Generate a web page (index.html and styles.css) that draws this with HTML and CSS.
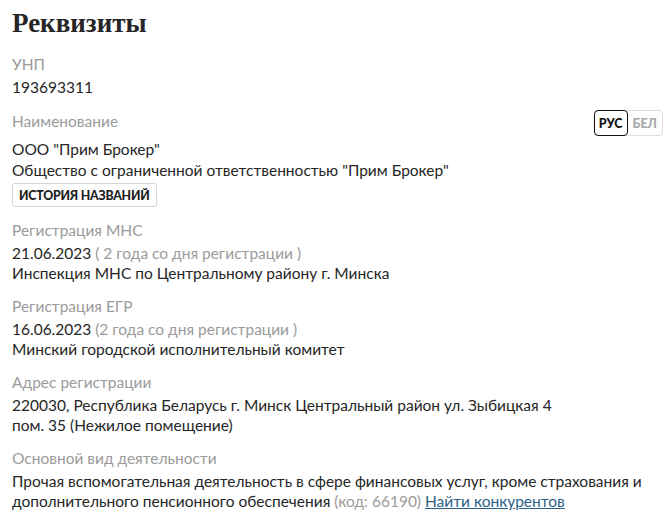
FILE: index.html
```html
<!DOCTYPE html>
<html lang="ru">
<head>
<meta charset="utf-8">
<link rel="stylesheet" href="styles.css">
</head>
<body>
<div class="page">
  <h1 class="title">Реквизиты</h1>

  <section class="field">
    <div class="label">УНП</div>
    <div class="value">193693311</div>
  </section>

  <section class="field">
    <div class="label-row">
      <div class="label">Наименование</div>
      <div class="lang">
        <span class="lang-btn active">РУС</span>
        <span class="lang-btn">БЕЛ</span>
      </div>
    </div>
    <div class="value">ООО "Прим Брокер"</div>
    <div class="value spaced">Общество с ограниченной ответственностью "Прим Брокер"</div>
    <button class="history">ИСТОРИЯ НАЗВАНИЙ</button>
  </section>

  <section class="field">
    <div class="label">Регистрация МНС</div>
    <div class="value">21.06.2023 <span class="muted">( 2 года со дня регистрации )</span></div>
    <div class="value">Инспекция МНС по Центральному району г. Минска</div>
  </section>

  <section class="field">
    <div class="label">Регистрация ЕГР</div>
    <div class="value">16.06.2023 <span class="muted">(2 года со дня регистрации )</span></div>
    <div class="value">Минский городской исполнительный комитет</div>
  </section>

  <section class="field">
    <div class="label">Адрес регистрации</div>
    <div class="value">220030, Республика Беларусь г. Минск Центральный район ул. Зыбицкая 4<br>пом. 35 (Нежилое помещение)</div>
  </section>

  <section class="field">
    <div class="label">Основной вид деятельности</div>
    <div class="value">Прочая вспомогательная деятельность в сфере финансовых услуг, кроме страхования и дополнительного пенсионного обеспечения <span class="muted">(код: 66190)</span> <a class="link" href="#">Найти конкурентов</a></div>
  </section>
</div>
</body>
</html>
```
FILE: styles.css
```css
html, body {
  margin: 0;
  padding: 0;
  background: #ffffff;
}
.page {
  padding: 5px 12px 0 12px;
  font-family: Lato, "Noto Sans", sans-serif;
  font-size: 15.5px;
  color: #262626;
  display: flex;
  flex-direction: column;
  gap: 13px;
}
.title {
  margin: 0;
  font-family: "Liberation Serif", serif;
  font-weight: bold;
  font-size: 27px;
  line-height: 36px;
  color: #262626;
}
.field {
  display: flex;
  flex-direction: column;
  align-items: flex-start;
}
.label {
  color: #9b9b9b;
  line-height: 20px;
  margin-bottom: 3px;
}
.label-row {
  align-self: stretch;
  display: flex;
  justify-content: space-between;
  align-items: center;
  height: 26px;
  margin-bottom: 3px;
}
.label-row .label {
  margin-bottom: 0;
  margin-top: -4px;
}
.value {
  line-height: 20px;
}
.value.spaced {
  margin-top: 1px;
}
.muted {
  color: #9b9b9b;
}
.link {
  color: #2d6287;
  text-decoration: underline;
}
.history {
  margin-top: 3px;
  height: 24px;
  padding: 0 6px;
  border: 1px solid #d6d6d6;
  border-radius: 3px;
  background: #ffffff;
  font-family: Lato, "Noto Sans", sans-serif;
  font-weight: 900;
  font-size: 12.3px;
  letter-spacing: -0.2px;
  color: #1e1e1e;
  display: flex;
  align-items: center;
}
.lang {
  display: flex;
  height: 26px;
  border: 1px solid #dddddd;
  border-radius: 4px;
  box-sizing: border-box;
  margin-right: -8px;
}
.lang-btn {
  display: flex;
  align-items: center;
  padding: 0 5px;
  font-weight: 900;
  font-size: 12.5px;
  color: #a8a8a8;
}
.lang-btn.active {
  margin: -1px 0 -1px -1px;
  padding: 0 4px;
  border: 1.5px solid #111111;
  border-radius: 4px;
  color: #111111;
}
```
